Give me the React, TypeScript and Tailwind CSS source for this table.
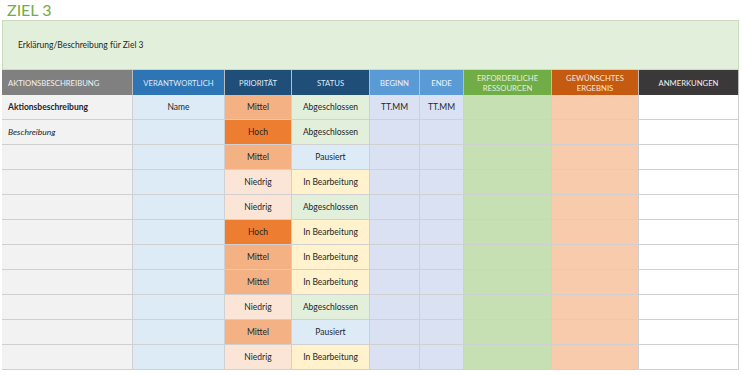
import React from 'react';

type Row = {
  action: string;
  actionStyle?: 'bold' | 'italic';
  owner: string;
  prio: 'Hoch' | 'Mittel' | 'Niedrig';
  status: 'Abgeschlossen' | 'Pausiert' | 'In Bearbeitung';
  start: string;
  end: string;
};

const prioBg: Record<Row['prio'], string> = {
  Hoch: 'bg-[#ed7d31]',
  Mittel: 'bg-[#f4b183]',
  Niedrig: 'bg-[#fbe5d6]',
};

const statusBg: Record<Row['status'], string> = {
  Abgeschlossen: 'bg-[#e2efda]',
  Pausiert: 'bg-[#ddebf7]',
  'In Bearbeitung': 'bg-[#fff2cc]',
};

const rows: Row[] = [
  { action: 'Aktionsbeschreibung', actionStyle: 'bold', owner: 'Name', prio: 'Mittel', status: 'Abgeschlossen', start: 'TT.MM', end: 'TT.MM' },
  { action: 'Beschreibung', actionStyle: 'italic', owner: '', prio: 'Hoch', status: 'Abgeschlossen', start: '', end: '' },
  { action: '', owner: '', prio: 'Mittel', status: 'Pausiert', start: '', end: '' },
  { action: '', owner: '', prio: 'Niedrig', status: 'In Bearbeitung', start: '', end: '' },
  { action: '', owner: '', prio: 'Niedrig', status: 'Abgeschlossen', start: '', end: '' },
  { action: '', owner: '', prio: 'Hoch', status: 'In Bearbeitung', start: '', end: '' },
  { action: '', owner: '', prio: 'Mittel', status: 'In Bearbeitung', start: '', end: '' },
  { action: '', owner: '', prio: 'Mittel', status: 'In Bearbeitung', start: '', end: '' },
  { action: '', owner: '', prio: 'Niedrig', status: 'Abgeschlossen', start: '', end: '' },
  { action: '', owner: '', prio: 'Mittel', status: 'Pausiert', start: '', end: '' },
  { action: '', owner: '', prio: 'Niedrig', status: 'In Bearbeitung', start: '', end: '' },
];

const headers = [
  { label: 'AKTIONSBESCHREIBUNG', cls: 'bg-[#808080] text-[#f2f2f2] justify-start pl-[6px]' },
  { label: 'VERANTWORTLICH', cls: 'bg-[#2e75b6] text-[#ddebf7]' },
  { label: 'PRIORITÄT', cls: 'bg-[#1f4e79] text-[#ddebf7]' },
  { label: 'STATUS', cls: 'bg-[#1f4e79] text-[#ddebf7]' },
  { label: 'BEGINN', cls: 'bg-[#5b9bd5] text-[#eef4fb]' },
  { label: 'ENDE', cls: 'bg-[#5b9bd5] text-[#eef4fb]' },
  { label: 'ERFORDERLICHE RESSOURCEN', cls: 'bg-[#70ad47] text-[#e2efda]' },
  { label: 'GEWÜNSCHTES ERGEBNIS', cls: 'bg-[#c55a11] text-[#fbe5d6]' },
  { label: 'ANMERKUNGEN', cls: 'bg-[#3a3838] text-[#f2f2f2]' },
];

const cell = 'flex items-center justify-center pt-[1px] border-r border-b border-[#d0d0d0] text-[8.5px] text-[#262626]';

export default function App() {
  return (
    <div className="w-[742px] h-[375px] bg-white overflow-hidden font-['Lato','Liberation_Sans',sans-serif]">
      <div className="h-[20px] pl-[7px] flex items-center text-[#70ad47] text-[16px] leading-none">
        ZIEL 3
      </div>
      <div className="ml-[2px] w-[737px] h-[50px] bg-[#e2efda] border border-[#c9dcbd] flex items-center pl-[15px] pt-[1px] text-[8.5px] text-[#262626]">
        Erklärung/Beschreibung für Ziel 3
      </div>
      <div className="ml-[2px] w-[737px] grid grid-cols-[131px_92px_67px_78px_50px_44px_88px_87px_100px] auto-rows-[25px]">
        {headers.map((h) => (
          <div
            key={h.label}
            className={`h-[26px] flex items-center justify-center text-center text-[7.7px] leading-[10px] px-[8px] border-r border-[#bcbcbc] ${h.cls}`}
          >
            {h.label}
          </div>
        ))}
        {rows.map((r, i) => (
          <React.Fragment key={i}>
            <div
              className={`${cell} bg-[#f2f2f2] !justify-start pl-[6px] ${
                r.actionStyle === 'bold' ? 'font-bold' : r.actionStyle === 'italic' ? 'italic' : ''
              }`}
            >
              {r.action}
            </div>
            <div className={`${cell} bg-[#ddebf7]`}>{r.owner}</div>
            <div className={`${cell} ${prioBg[r.prio]}`}>{r.prio}</div>
            <div className={`${cell} ${statusBg[r.status]}`}>{r.status}</div>
            <div className={`${cell} bg-[#d9e1f2]`}>{r.start}</div>
            <div className={`${cell} bg-[#d9e1f2]`}>{r.end}</div>
            <div className={`${cell} bg-[#c6e0b4]`} />
            <div className={`${cell} bg-[#f8cbad]`} />
            <div className={`${cell} bg-white`} />
          </React.Fragment>
        ))}
      </div>
    </div>
  );
}
